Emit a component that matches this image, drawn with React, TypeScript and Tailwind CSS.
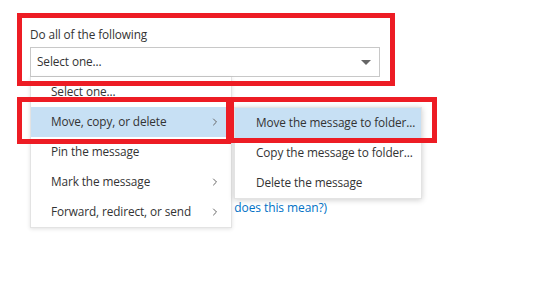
import { ChevronRight } from "lucide-react";

const mainItems = [
  { label: "Select one...", sub: false },
  { label: "Move, copy, or delete", sub: true, active: true },
  { label: "Pin the message", sub: false },
  { label: "Mark the message", sub: true },
  { label: "Forward, redirect, or send", sub: true },
];

const subItems = [
  { label: "Move the message to folder...", active: true },
  { label: "Copy the message to folder..." },
  { label: "Delete the message" },
];

export default function App() {
  return (
    <div className="relative w-[546px] h-[281px] overflow-hidden bg-white text-[11.8px] tracking-[-0.1px] text-[#333] whitespace-nowrap font-['Open_Sans','Lato',sans-serif]">
      {/* rule form */}
      <div className="pt-[25px] pl-[30px] w-[380px]">
        <div className="leading-[18px]">Do all of the following</div>
        <div className="mt-[4px] h-[30px] border border-[#c8c8c8] flex items-center justify-between pl-[6px] pr-[8px]">
          <span>Select one...</span>
          <span className="w-0 h-0 border-x-[5px] border-x-transparent border-t-[5px] border-t-[#666]" />
        </div>
        <div className="mt-[122px] w-[297px] flex justify-end leading-[18px] text-[12px] text-[#0072c6]">(What does this mean?)</div>
      </div>

      {/* dropdown */}
      <div className="absolute left-[30px] top-[77px] w-[202px] bg-white border border-[#e3e3e3] border-t-0 shadow-[0_1px_4px_rgba(0,0,0,0.12)] z-10">
        {mainItems.map((it) => (
          <div
            key={it.label}
            className={`h-[30px] flex items-center justify-between pl-[20px] pr-[10px] ${it.active ? "bg-[#c7e0f4]" : ""}`}
          >
            <span>{it.label}</span>
            {it.sub && <ChevronRight size={12} strokeWidth={2} className="text-[#666]" />}
          </div>
        ))}
      </div>

      {/* submenu */}
      <div className="absolute left-[234px] top-[107px] w-[188px] bg-white border border-[#e3e3e3] shadow-[0_1px_6px_rgba(0,0,0,0.2)] z-20">
        {subItems.map((it) => (
          <div
            key={it.label}
            className={`h-[30px] flex items-center pl-[21px] ${it.active ? "bg-[#c7e0f4]" : ""}`}
          >
            {it.label}
          </div>
        ))}
      </div>

      {/* annotation boxes */}
      <div className="absolute left-[17px] top-[13px] w-[378px] h-[73px] border-[5px] border-[#ed1c24] z-30" />
      <div className="absolute left-[17px] top-[97px] w-[214px] h-[47px] border-[5px] border-[#ed1c24] z-30" />
      <div className="absolute left-[229px] top-[97px] w-[208px] h-[46px] border-[5px] border-[#ed1c24] z-30" />
    </div>
  );
}
